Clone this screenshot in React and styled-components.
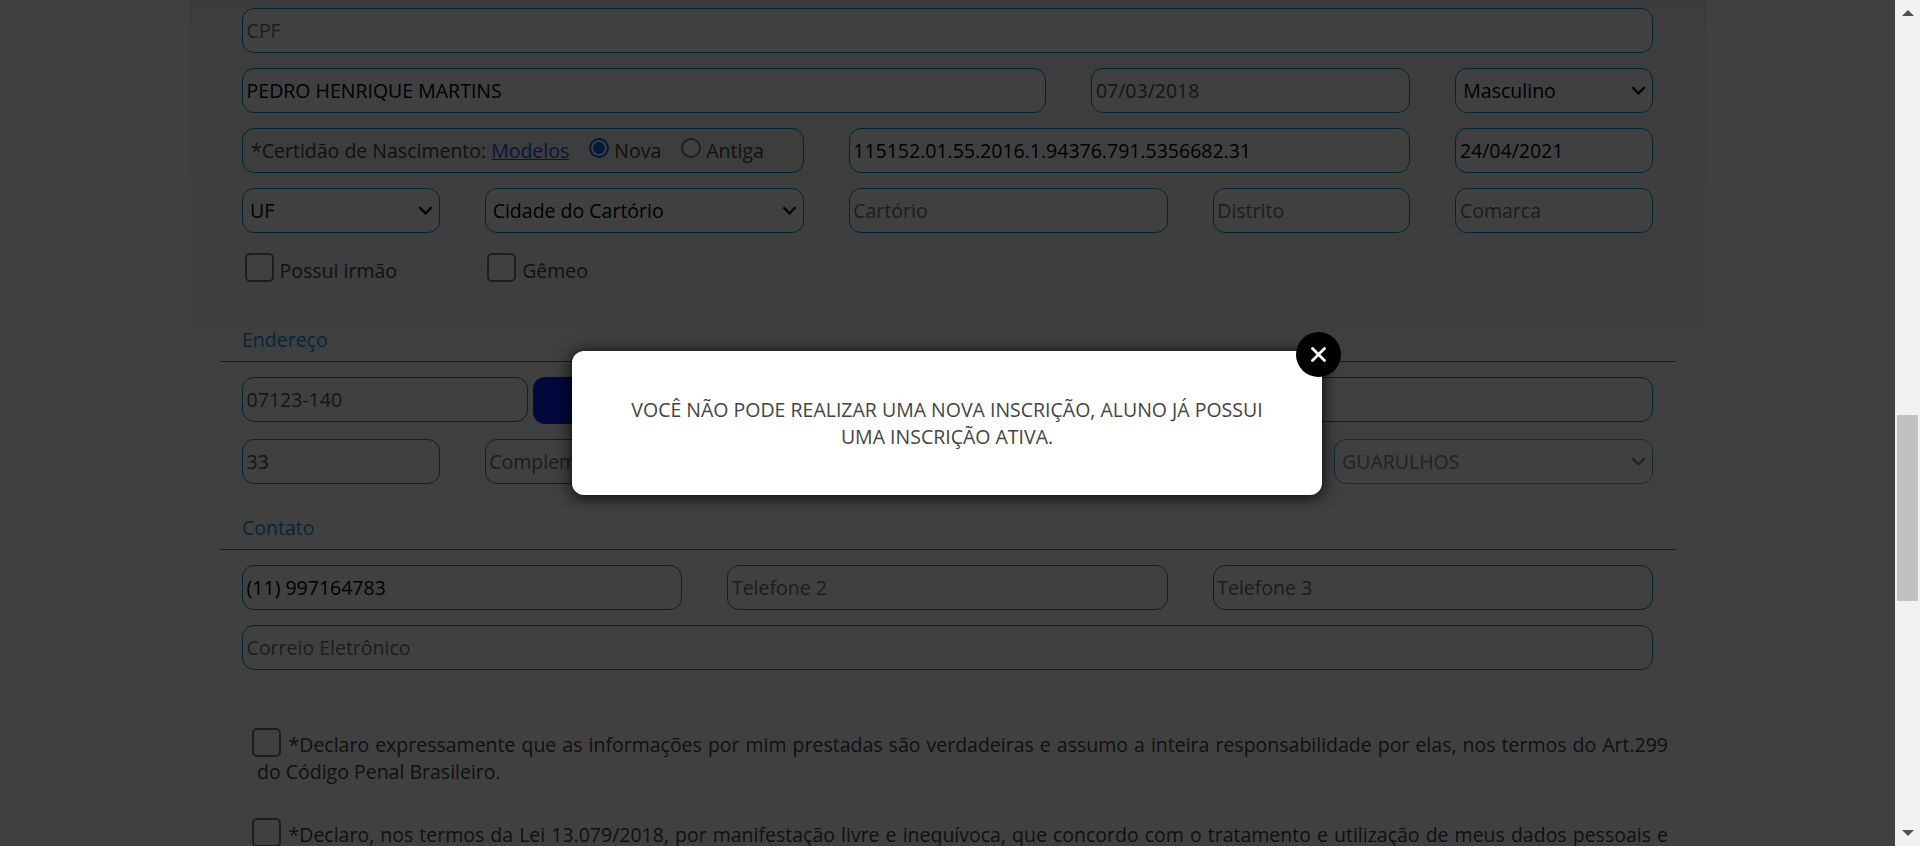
import React from 'react';
import styled, { createGlobalStyle } from 'styled-components';

const GlobalStyle = createGlobalStyle`
  * { box-sizing: border-box; }
  html, body { margin: 0; height: 846px; overflow: hidden; background: #fff; }
  body { font: 19.5px/27px "Open Sans", sans-serif; color: #444; }
`;

const Screen = styled.div`
  display: flex;
  width: 1920px;
  height: 846px;
  overflow: hidden;
`;

const Viewport = styled.main`
  position: relative;
  flex: 1;
  height: 846px;
  overflow: hidden;
  background: #fff;
`;

const Panel = styled.div`
  margin: 0 189px 0 190px;
  padding: 8px 30.5px 0 29.5px;
  background: linear-gradient(#f0f0f0, #fff 590px);
`;

const Row = styled.div`
  display: grid;
  grid-template-columns: repeat(12, 1fr);
  column-gap: 45px;
  padding: 0 22.5px;
  margin-bottom: ${(p) => p.$after ?? 15}px;
`;

const Field = styled.div`
  grid-column: span ${(p) => p.$span || 1};
  display: flex;
  align-items: center;
  height: 45px;
  min-width: 0;
  padding: ${(p) => (p.$select ? '0 6px 0 7px' : '0 3.6px')};
  border: 1px solid #008ec3;
  border-radius: 12px;
  background: #fff;
  white-space: nowrap;
  color: ${(p) => (p.$muted ? '#757575' : p.$soft ? '#555' : '#000')};
  opacity: ${(p) => (p.$disabled ? 0.7 : 1)};
  justify-content: space-between;
`;

const RadioField = styled(Field)`
  justify-content: flex-start;
  padding-left: 8px;
  color: #444;
  background: transparent;
`;

const ModelLink = styled.a`
  margin-left: 5px;
  color: #0d62ee;
  text-decoration: underline;
`;

const Radio = styled.span`
  width: 20px;
  height: 20px;
  flex: none;
  margin: -6px 5px 0 ${(p) => p.$gap}px;
  border: 2px solid ${(p) => (p.$on ? '#0067e0' : '#767676')};
  border-radius: 50%;
  background: ${(p) => (p.$on ? '#0067e0' : '#fff')};
  box-shadow: inset 0 0 0 2px #fff;
`;

const Check = styled.label`
  grid-column: span ${(p) => p.$span};
  display: flex;
  padding: 5px 0 0 2.5px;
  height: 45px;
`;

const CheckText = styled.span`
  padding: 4px 0 0 6px;
`;

const Box = styled.span`
  display: inline-block;
  flex: none;
  width: 29px;
  height: 29px;
  border: 2px solid #767676;
  border-radius: 5px;
  background: #fff;
`;

const Heading = styled.h2`
  height: ${(p) => p.$height}px;
  margin: 0 0 15px;
  padding-left: 22.5px;
  display: flex;
  align-items: flex-end;
  padding-bottom: 8px;
  border-bottom: 1px solid #008ec3;
  font-size: 19.5px;
  line-height: 27px;
  font-weight: 400;
  color: #1f98d2;
`;

const ZipGroup = styled.div`
  grid-column: span 5;
  display: flex;
  gap: 5px;
`;

const ZipField = styled(Field)`
  width: 286px;
`;

const SearchButton = styled.button`
  flex: 1;
  height: 47px;
  border: 0;
  border-radius: 12px;
  background: #0022ee;
`;

const Declaration = styled.p`
  margin: 0 0 0 37.5px;
  width: 1411px;
  height: 90px;
  text-align: justify;
`;

const DeclarationBox = styled(Box)`
  vertical-align: -5px;
  margin: -8px 8px 0 -5.5px;
`;

const Overlay = styled.div`
  position: absolute;
  inset: 0;
  display: flex;
  justify-content: center;
  align-items: center;
  padding-right: 1px;
  background: rgba(0, 0, 0, 0.75);
`;

const Dialog = styled.div`
  position: relative;
  width: 750px;
  height: 144px;
  padding: 45px 50px;
  border-radius: 12px;
  background: #fff;
  box-shadow: 0 2px 16px rgba(0, 0, 0, 0.95);
  text-align: center;
`;

const CloseButton = styled.button`
  position: absolute;
  top: -19px;
  right: -19px;
  width: 45px;
  height: 45px;
  padding: 0;
  display: grid;
  place-items: center;
  border: 0;
  border-radius: 50%;
  background: #000;
`;

const ScrollTrack = styled.aside`
  display: flex;
  flex-direction: column;
  align-items: center;
  width: 25px;
  height: 846px;
  padding: 10px 0;
  background: #f1f1f1;
`;

const ScrollThumb = styled.div`
  width: 21px;
  height: 186px;
  margin: 399px 0 229px;
  background: #c1c1c1;
`;

const Chevron = () => (
  <svg width="15" height="10" viewBox="0 0 15 10" fill="none" stroke="currentColor" strokeWidth="2.3">
    <path d="M1.5 1.3 7.5 7.3 13.5 1.3" />
  </svg>
);

const Arrow = ({ down }) => (
  <svg width="12" height="6" viewBox="0 0 12 6" fill="#505050">
    <path d={down ? 'M0 0H12L6 6Z' : 'M0 6H12L6 0Z'} />
  </svg>
);

const Select = ({ children, ...rest }) => (
  <Field $select {...rest}>
    <span>{children}</span>
    <Chevron />
  </Field>
);

export default function App() {
  return (
    <Screen>
      <GlobalStyle />
      <Viewport>
        <Panel>
          <Row>
            <Field $span={12} $muted>CPF</Field>
          </Row>
          <Row>
            <Field $span={7}>PEDRO HENRIQUE MARTINS</Field>
            <Field $span={3} $soft>07/03/2018</Field>
            <Select $span={2}>Masculino</Select>
          </Row>
          <Row>
            <RadioField $span={5}>
              *Certidão de Nascimento: <ModelLink>Modelos</ModelLink>
              <Radio $on $gap={20} />
              Nova
              <Radio $gap={20} />
              Antiga
            </RadioField>
            <Field $span={5}>115152.01.55.2016.1.94376.791.5356682.31</Field>
            <Field $span={2}>24/04/2021</Field>
          </Row>
          <Row>
            <Select $span={2}>UF</Select>
            <Select $span={3}>Cidade do Cartório</Select>
            <Field $span={3} $muted>Cartório</Field>
            <Field $span={2} $muted>Distrito</Field>
            <Field $span={2} $muted>Comarca</Field>
          </Row>
          <Row $after={0}>
            <Check $span={2}><Box /><CheckText>Possui irmão</CheckText></Check>
            <Check $span={2}><Box /><CheckText>Gêmeo</CheckText></Check>
          </Row>
          <Heading $height={69}>Endereço</Heading>
          <Row>
            <ZipGroup>
              <ZipField $soft>07123-140</ZipField>
              <SearchButton aria-label="Buscar" />
            </ZipGroup>
            <Field $span={7} />
          </Row>
          <Row $after={0}>
            <Field $span={2} $soft>33</Field>
            <Field $span={3} $muted>Complemento</Field>
            <Field $span={4} />
            <Select $span={3} $soft $disabled>GUARULHOS</Select>
          </Row>
          <Heading $height={66}>Contato</Heading>
          <Row>
            <Field $span={4}>(11) 997164783</Field>
            <Field $span={4} $muted>Telefone 2</Field>
            <Field $span={4} $muted>Telefone 3</Field>
          </Row>
          <Row $after={61}>
            <Field $span={12} $muted>Correio Eletrônico</Field>
          </Row>
          <Declaration>
            <DeclarationBox />
            *Declaro expressamente que as informações por mim prestadas são verdadeiras e assumo a inteira responsabilidade por elas, nos termos do Art.299 do Código Penal Brasileiro.
          </Declaration>
          <Declaration>
            <DeclarationBox />
            *Declaro, nos termos da Lei 13.079/2018, por manifestação livre e inequívoca, que concordo com o tratamento e utilização de meus dados pessoais e sensíveis.
          </Declaration>
        </Panel>
        <Overlay>
          <Dialog role="dialog">
            VOCÊ NÃO PODE REALIZAR UMA NOVA INSCRIÇÃO, ALUNO JÁ POSSUI UMA INSCRIÇÃO ATIVA.
            <CloseButton aria-label="Fechar">
              <svg width="15" height="15" viewBox="0 0 15 15" stroke="#fff" strokeWidth="2.8" strokeLinecap="round">
                <path d="M1.5 1.5 13.5 13.5M13.5 1.5 1.5 13.5" />
              </svg>
            </CloseButton>
          </Dialog>
        </Overlay>
      </Viewport>
      <ScrollTrack>
        <Arrow />
        <ScrollThumb />
        <Arrow down />
      </ScrollTrack>
    </Screen>
  );
}
